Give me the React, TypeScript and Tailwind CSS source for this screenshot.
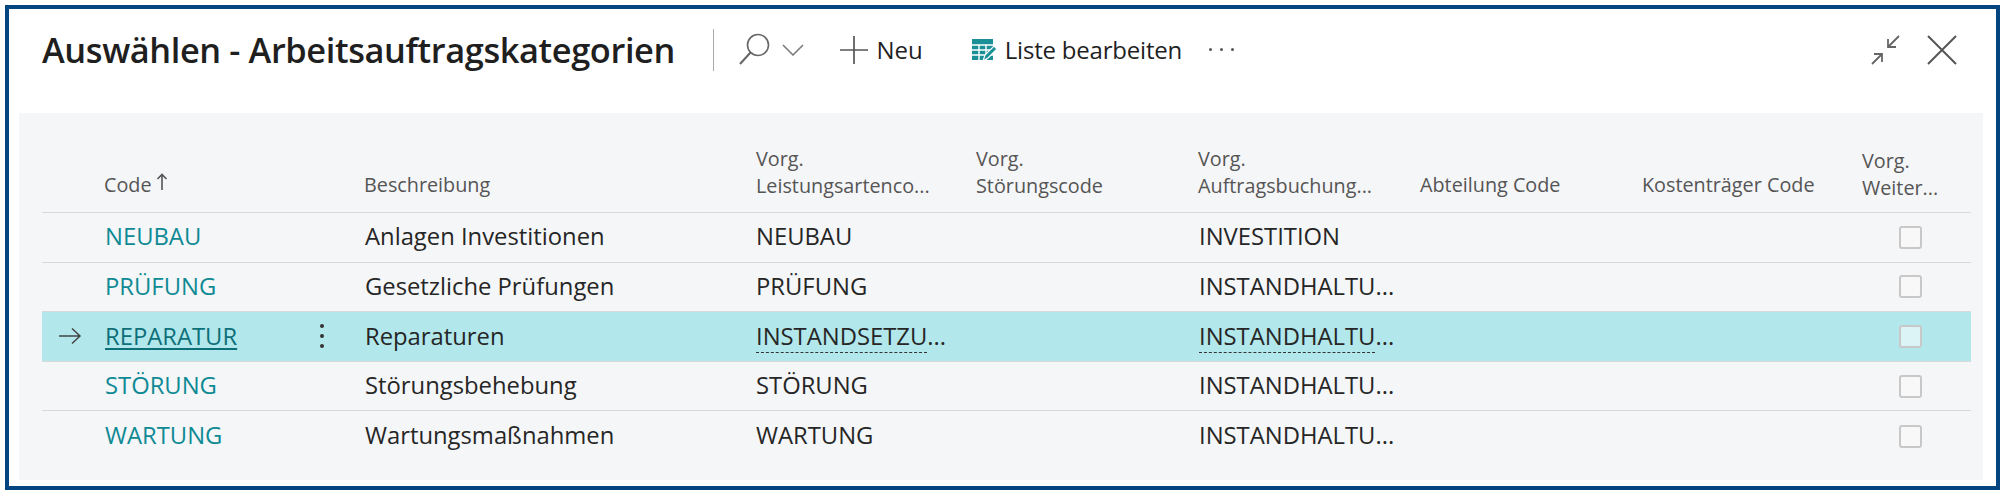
const rows = [
  { code: "NEUBAU", desc: "Anlagen Investitionen", art: "NEUBAU", buch: "INVESTITION" },
  { code: "PRÜFUNG", desc: "Gesetzliche Prüfungen", art: "PRÜFUNG", buch: "INSTANDHALTU..." },
  { code: "REPARATUR", desc: "Reparaturen", art: "INSTANDSETZU...", buch: "INSTANDHALTU...", active: true },
  { code: "STÖRUNG", desc: "Störungsbehebung", art: "STÖRUNG", buch: "INSTANDHALTU..." },
  { code: "WARTUNG", desc: "Wartungsmaßnahmen", art: "WARTUNG", buch: "INSTANDHALTU..." },
]

const gridCols = "grid grid-cols-[62px_260px_392px_220px_222px_222px_222px_220px_1fr]"

function Dashed({ text }: { text: string }) {
  const clean = text.replace("...", "")
  return (
    <span>
      <span className="border-b-[1.5px] border-dashed border-[#333]">{clean}</span>...
    </span>
  )
}

function EditListIcon() {
  return (
    <svg width="27" height="27" viewBox="0 0 27 27" fill="none">
      <path d="M1 2h21v21H1z" fill="#1a8f96" />
      <path d="M1 8h21M1 13h21M1 18h21M8 8v15M15 8v15" stroke="#fff" strokeWidth="1.4" />
      <path d="M12 24l2-6 9-9 3 3-9 9z" fill="#1a8f96" stroke="#fff" strokeWidth="1.2" />
    </svg>
  )
}

export default function App() {
  return (
    <div className="h-[495px] w-[2005px] bg-white p-[5px] font-['Open_Sans',sans-serif]">
      <div className="flex h-full flex-col border-[4px] border-[#03467f] bg-white pl-[10px] pr-[13px]">
        <div className="flex h-[104px] shrink-0 items-center pb-[22px] pl-[23px] pr-[26px]">
          <h1 className="text-[34.4px] font-semibold tracking-[-0.4px] whitespace-nowrap text-[#1f1f1f]">
            Auswählen - Arbeitsauftragskategorien
          </h1>
          <div className="ml-[38px] h-[42px] w-[1.5px] bg-[#aaa]" />
          <svg className="ml-[24px]" width="33" height="34" viewBox="0 0 33 34" fill="none" stroke="#666" strokeWidth="1.6">
            <circle cx="20" cy="12" r="10.5" />
            <path d="M12.5 19.5L2 31" strokeWidth="2" />
          </svg>
          <svg className="ml-[11px]" width="22" height="12" viewBox="0 0 22 12" fill="none" stroke="#777" strokeWidth="1.5">
            <path d="M1 1l10 10L21 1" />
          </svg>
          <svg className="ml-[36px]" width="28" height="28" viewBox="0 0 30 30" fill="none" stroke="#555" strokeWidth="1.8">
            <path d="M15 0v30M0 15h30" />
          </svg>
          <span className="ml-[8px] text-[24px] text-[#1f1f1f]">Neu</span>
          <div className="ml-[48px]">
            <EditListIcon />
          </div>
          <span className="ml-[7px] text-[24px] tracking-[-0.2px] text-[#1f1f1f]">Liste bearbeiten</span>
          <div className="ml-[27px] flex gap-[8px] pb-[2px]">
            <i className="h-[3px] w-[3px] rounded-full bg-[#555]" />
            <i className="h-[3px] w-[3px] rounded-full bg-[#555]" />
            <i className="h-[3px] w-[3px] rounded-full bg-[#555]" />
          </div>
          <div className="ml-auto flex items-center gap-[26px]">
            <svg width="30" height="30" viewBox="0 0 30 30" fill="none" stroke="#666" strokeWidth="1.8">
              <path d="M28 1L17 12M17 4v8h8M1 29l10-10M3 19h8v8" />
            </svg>
            <svg width="30" height="30" viewBox="0 0 30 30" fill="none" stroke="#555" strokeWidth="2">
              <path d="M1 1l28 28M29 1L1 29" />
            </svg>
          </div>
        </div>

        <div className="h-[367px] bg-[#f5f6f8] pl-[23px] pr-[12px]">
          <div className={`${gridCols} h-[100px] items-end border-b-[1.5px] border-[#d9d9d9] text-[19.8px] leading-[27px] text-[#555] whitespace-nowrap`}>
            <div />
            <div className="flex items-center gap-[4px] pb-[14px]">
              Code
              <svg className="mb-[6px]" width="12" height="18" viewBox="0 0 12 18" fill="none" stroke="#555" strokeWidth="1.6">
                <path d="M6 17V2M1.5 6L6 1.5 10.5 6" />
              </svg>
            </div>
            <div className="pb-[14px]">Beschreibung</div>
            <div className="pb-[13px]">
              Vorg.
              <br />
              Leistungsartenco...
            </div>
            <div className="pb-[13px]">
              Vorg.
              <br />
              Störungscode
            </div>
            <div className="pb-[13px]">
              Vorg.
              <br />
              Auftragsbuchung...
            </div>
            <div className="pb-[14px]">Abteilung Code</div>
            <div className="pb-[14px]">Kostenträger Code</div>
            <div className="pb-[11px]">
              Vorg.
              <br />
              Weiter...
            </div>
          </div>

          {rows.map((row, i) => (
            <div
              key={row.code}
              className={`${gridCols} h-[49.6px] items-center text-[23.8px] text-[#262626] ${
                i < rows.length - 1 && i !== 2 ? "border-b-[1.5px] border-[#d9d9d9]" : ""
              } ${row.active ? "border-b-[1.5px] border-[#d9d9d9] bg-[#b2e8ec]" : ""}`}
            >
              <div className="flex justify-center pr-[6px]">
                {row.active && (
                  <svg width="24" height="18" viewBox="0 0 24 18" fill="none" stroke="#444" strokeWidth="1.5">
                    <path d="M1 9h21M14 1.5L22 9l-8 7.5" />
                  </svg>
                )}
              </div>
              <div className="flex items-center justify-between pl-[1px] pr-[40px]">
                <span className={row.active ? "text-[#0d6f78] underline underline-offset-[3px]" : "text-[#0e8a94]"}>{row.code}</span>
                {row.active && (
                  <div className="flex flex-col gap-[6px]">
                    <i className="h-[4px] w-[4px] rounded-full bg-[#333]" />
                    <i className="h-[4px] w-[4px] rounded-full bg-[#333]" />
                    <i className="h-[4px] w-[4px] rounded-full bg-[#333]" />
                  </div>
                )}
              </div>
              <div className="pl-[1px]">{row.desc}</div>
              <div className="whitespace-nowrap">{row.active ? <Dashed text={row.art} /> : row.art}</div>
              <div />
              <div className="whitespace-nowrap pl-[1px]">{row.active ? <Dashed text={row.buch} /> : row.buch}</div>
              <div />
              <div />
              <div className="flex justify-center pr-[12px]">
                <div className={`h-[23px] w-[23px] rounded-[3px] border-2 border-[#c8c8c8] ${row.active ? "bg-[#dcf4f6]" : "bg-[#f8f8f8]"}`} />
              </div>
            </div>
          ))}
        </div>
      </div>
    </div>
  )
}
